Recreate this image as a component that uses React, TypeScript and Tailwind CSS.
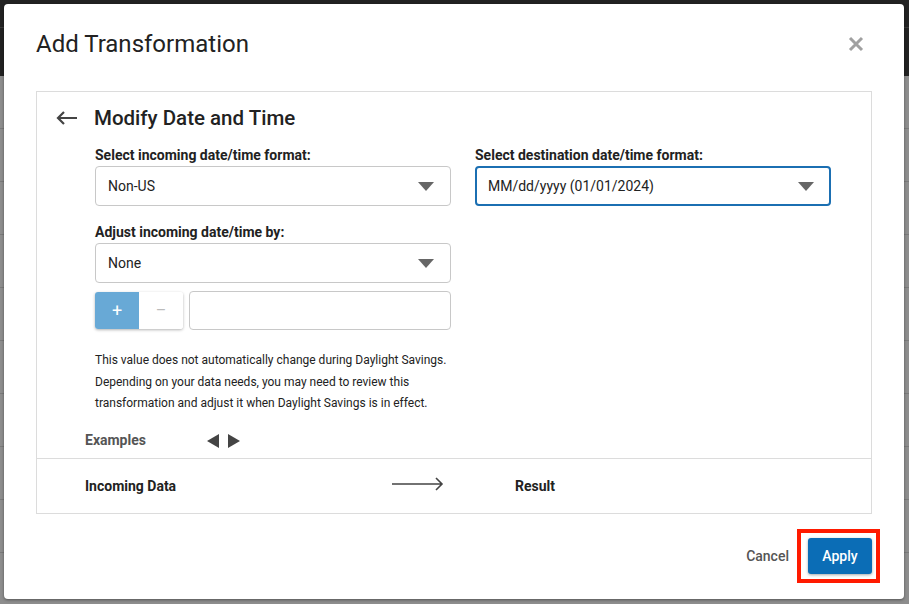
import React from 'react';

const Caret = () => (
  <svg width="16" height="9" viewBox="0 0 16 9" className="shrink-0">
    <path d="M0 0 H16 L8 9 Z" fill="#666" />
  </svg>
);

const Select = ({ value, focused }: { value: string; focused?: boolean }) => (
  <div
    className={
      focused
        ? 'flex h-[40px] w-[356px] items-center justify-between rounded-[4px] border-2 border-[#1b6fb2] pl-[11px] pr-[15px]'
        : 'flex h-[40px] w-[356px] items-center justify-between rounded-[4px] border border-[#c8c8c8] pl-[12px] pr-[16px]'
    }
  >
    <span className="text-[14px] text-[#222]">{value}</span>
    <Caret />
  </div>
);

export default function App() {
  return (
    <div
      className="relative h-[604px] w-[909px] overflow-hidden bg-[#8d8d8d]"
      style={{ fontFamily: 'Roboto, "Liberation Sans", sans-serif' }}
    >
      {/* backdrop page */}
      <div className="h-[76px] bg-[#222]">
        <div className="h-[28px] border-b border-[#3a3a3a]" />
      </div>
      <div className="flex flex-col">
        {[0, 1, 2, 3, 4, 5, 6, 7, 8, 9].map((i) => (
          <div key={i} className="h-[53px] border-b border-[#7a7a7a]" />
        ))}
      </div>

      {/* modal */}
      <div className="absolute left-[4px] top-[4px] flex h-[595px] w-[900px] flex-col rounded-[4px] bg-white px-[32px] shadow-[0_1px_3px_rgba(0,0,0,0.4)]">
        <div className="mt-[26px] flex h-[28px] items-center justify-between">
          <h1 className="text-[24px] leading-[28px] text-[#222]">Add Transformation</h1>
          <svg width="16" height="16" viewBox="0 0 16 16" className="mr-[8px]">
            <path d="M2 2 L14 14 M14 2 L2 14" stroke="#a0a0a0" strokeWidth="3" />
          </svg>
        </div>

        <div className="mt-[33px] flex h-[423px] flex-col border border-[#dcdcdc]">
          <div className="flex flex-1 flex-col pl-[19px]">
            <div className="mt-[12px] flex h-[28px] items-center">
              <svg width="22" height="14" viewBox="0 0 22 14">
                <path d="M21 7 H2 M8 1 L2 7 L8 13" stroke="#444" strokeWidth="2.2" fill="none" />
              </svg>
              <span className="ml-[16px] text-[20.5px] font-medium text-[#222]">Modify Date and Time</span>
            </div>

            <div className="ml-[39px] mt-[13px] flex gap-[24px]">
              <div className="flex w-[356px] flex-col">
                <label className="h-[20px] text-[14px] font-bold leading-[20px] text-[#222]">
                  Select incoming date/time format:
                </label>
                <div className="mt-[1px]">
                  <Select value="Non-US" />
                </div>
                <label className="mt-[16px] h-[20px] text-[14px] font-bold leading-[20px] text-[#222]">
                  Adjust incoming date/time by:
                </label>
                <div className="mt-[1px]">
                  <Select value="None" />
                </div>
                <div className="mt-[8px] flex items-center gap-[6px]">
                  <div className="flex h-[37px] w-[88px] overflow-hidden rounded-[3px] shadow-[0_1px_3px_rgba(0,0,0,0.3)]">
                    <div className="flex w-[44px] items-center justify-center bg-[#68a9d6] text-[18px] text-white">+</div>
                    <div className="flex w-[44px] items-center justify-center bg-white text-[16px] text-[#bbb]">–</div>
                  </div>
                  <div className="h-[39px] flex-1 rounded-[4px] border border-[#c8c8c8]" />
                </div>
                <p className="mt-[20px] text-[12px] leading-[21.5px] text-[#222]">
                  This value does not automatically change during Daylight Savings.
                  <br />
                  Depending on your data needs, you may need to review this
                  <br />
                  transformation and adjust it when Daylight Savings is in effect.
                </p>
              </div>
              <div className="flex w-[356px] flex-col">
                <label className="h-[20px] text-[14px] font-bold leading-[20px] text-[#222]">
                  Select destination date/time format:
                </label>
                <div className="mt-[1px]">
                  <Select value="MM/dd/yyyy (01/01/2024)" focused />
                </div>
              </div>
            </div>

            <div className="ml-[29px] mt-[16px] flex h-[20px] items-center">
              <span className="w-[122px] text-[14px] font-bold text-[#555]">Examples</span>
              <svg width="34" height="14" viewBox="0 0 34 14">
                <path d="M0 7 L12 0 V14 Z" fill="#444" />
                <path d="M33 7 L21 0 V14 Z" fill="#444" />
              </svg>
            </div>
          </div>

          <div className="flex h-[55px] items-center border-t border-[#dcdcdc] pl-[48px]">
            <span className="w-[307px] text-[14px] font-bold text-[#222]">Incoming Data</span>
            <svg width="52" height="14" viewBox="0 0 52 14" className="-mt-[5px]">
              <path d="M0 7 H50 M44 1 L50 7 L44 13" stroke="#444" strokeWidth="1.6" fill="none" />
            </svg>
            <span className="ml-[71px] text-[14px] font-bold text-[#222]">Result</span>
          </div>
        </div>

        <div className="mt-[24px] flex items-center justify-end">
          <span className="mr-[19px] text-[14px] font-medium text-[#555]">Cancel</span>
          <div className="relative">
            <button className="flex h-[36px] w-[64px] items-center justify-center rounded-[3px] bg-[#0b6db6] text-[14px] font-medium text-white shadow-[0_1px_3px_rgba(0,0,0,0.35)]">
              Apply
            </button>
            <div className="pointer-events-none absolute -bottom-[9px] -left-[11px] -right-[8px] -top-[9px] border-4 border-[#ff1a00]" />
          </div>
        </div>
      </div>
    </div>
  );
}
